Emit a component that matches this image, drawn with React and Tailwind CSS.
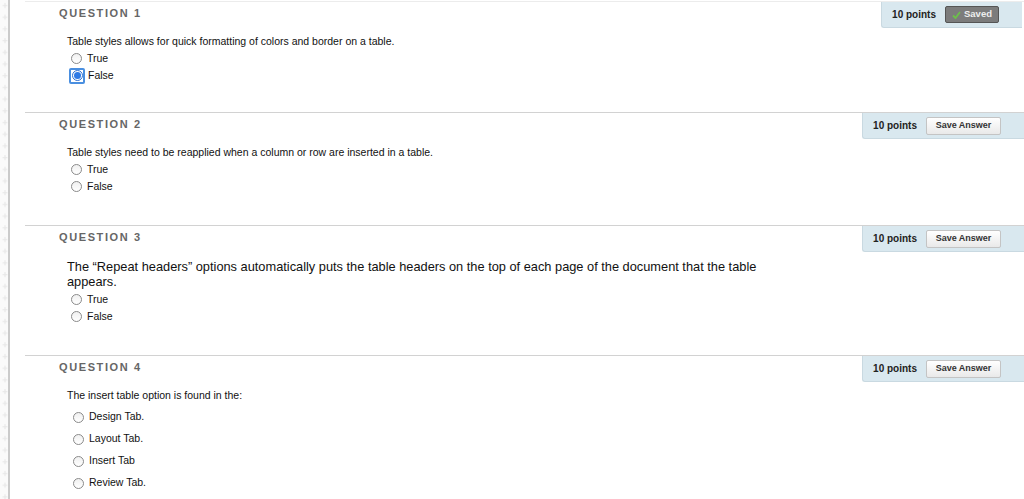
import { useState } from "react"

const questions = [
  {
    num: 1,
    text: "Table styles allows for quick formatting of colors and border on a table.",
    options: ["True", "False"],
    saved: true,
    h: "h-[111px]",
  },
  {
    num: 2,
    text: "Table styles need to be reapplied when a column or row are inserted in a table.",
    options: ["True", "False"],
    h: "h-[113px]",
  },
  {
    num: 3,
    text: "The \u201cRepeat headers\u201d options automatically puts the table headers on the top of each page of the document that the table appears.",
    options: ["True", "False"],
    big: true,
    h: "h-[130px]",
  },
  {
    num: 4,
    text: "The insert table option is found in the:",
    options: ["Design Tab.", "Layout Tab.", "Insert Tab", "Review Tab."],
    wide: true,
    h: "h-[160px]",
  },
]

function Radio({ checked }) {
  if (checked) {
    return (
      <span className="flex h-[16px] w-[16px] items-center justify-center rounded-[2px] border-2 border-[#4a8fe0]">
        <span className="flex h-[11px] w-[11px] items-center justify-center rounded-full border border-[#2f6fd0] bg-white">
          <span className="h-[7px] w-[7px] rounded-full bg-[#2f7ae5]" />
        </span>
      </span>
    )
  }
  return (
    <span className="block h-[11px] w-[11px] rounded-full border border-[#8a8a8a] bg-gradient-to-b from-[#f0f0f0] to-white" />
  )
}

function PointsBox({ saved }) {
  return (
    <div
      className={
        "flex h-[26px] items-center gap-[9px] rounded-bl-[3px] border-b border-l border-[#c9d9e1] bg-[#d9e8ef] pl-[10px] pr-[23px] " +
        (saved ? "mr-[2px]" : "")
      }
    >
      <span className="text-[10px] font-bold text-[#222]">10 points</span>
      {saved ? (
        <span className="flex h-[17px] w-[54px] items-center justify-center gap-[3px] rounded-[2px] border border-[#555] bg-[#7c7c7c] text-[9.5px] font-bold text-[#eee]">
          <svg width="9" height="8" viewBox="0 0 9 8">
            <path d="M1 4.5 L3.5 7 L8 1" fill="none" stroke="#6cc04a" strokeWidth="1.8" />
          </svg>
          Saved
        </span>
      ) : (
        <span className="flex h-[18px] w-[75px] items-center justify-center rounded-[2px] border border-[#c4c4c4] bg-gradient-to-b from-white to-[#e9e9e9] text-[9px] font-bold text-[#333]">
          Save Answer
        </span>
      )}
    </div>
  )
}

function Question({ q }) {
  const [answer] = useState(q.saved ? "False" : null)
  return (
    <section
      className={
        "flex border-t " +
        (q.num === 1 ? "border-[#ececec] " : "border-[#d2d2d2] ") +
        q.h
      }
    >
      <div className="flex-1 pl-[34px]">
        <div className="flex h-[22px] items-center text-[11px] font-bold tracking-[1.6px] text-[#666]">
          QUESTION {q.num}
        </div>
        <div
          className={
            "pl-[8px] text-[#111] " +
            (q.big
              ? "mt-[11px] max-w-[712px] text-[12.8px] leading-[15px]"
              : "mt-[11px] text-[10.5px] leading-[13px]")
          }
        >
          {q.text}
        </div>
        <div className={q.wide ? "mt-[4px] pl-[14px]" : "mt-[2px] pl-[12px]"}>
          {q.options.map((o) => {
            const checked = answer === o
            return (
              <div
                key={o}
                className={
                  "flex items-center " +
                  (q.wide ? "h-[22px] gap-[5px]" : "h-[17px] gap-[5px]")
                }
              >
                <span className={checked ? "-ml-[2px] -mr-[2px]" : ""}>
                  <Radio checked={checked} />
                </span>
                <span className="text-[10.5px] text-[#111]">{o}</span>
              </div>
            )
          })}
        </div>
      </div>
      <div className="self-start">
        <PointsBox saved={q.saved} />
      </div>
    </section>
  )
}

export default function App() {
  return (
    <div className="flex h-[499px] w-full overflow-hidden bg-white font-['Liberation_Sans',Arial,sans-serif]">
      <div className="h-full w-[8px] bg-[#fafafa]">
        <svg width="8" height="499">
          <defs>
            <pattern id="plus" width="8" height="11.7" patternUnits="userSpaceOnUse">
              <path d="M5 3 V8 M2.5 5.5 H7.5" stroke="#e6e6e6" strokeWidth="1" />
            </pattern>
          </defs>
          <rect width="8" height="499" fill="url(#plus)" />
        </svg>
      </div>
      <div className="h-full w-[2px] bg-[#cbcbcb]" />
      <main className="flex-1 pl-[15px] pt-[1px]">
        {questions.map((q) => (
          <Question key={q.num} q={q} />
        ))}
      </main>
    </div>
  )
}
